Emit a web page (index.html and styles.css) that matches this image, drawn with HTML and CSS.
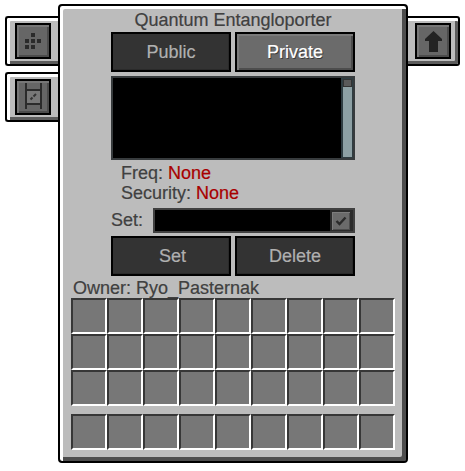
FILE: index.html
```html
<!DOCTYPE html>
<html lang="en">
<head>
<meta charset="utf-8">
<title>Quantum Entangloporter</title>
<link rel="stylesheet" href="styles.css">
</head>
<body>
<main class="gui">
  <nav class="tabs tabs-left">
    <div class="tab tab-left">
      <button class="icon-btn" type="button" aria-label="Visuals">
        <svg width="32" height="32" viewBox="0 0 32 32"><g fill="#2b2b2b"><rect x="14" y="8" width="4" height="4"/><rect x="8" y="14" width="4" height="4"/><rect x="14" y="14" width="4" height="4"/><rect x="20" y="14" width="4" height="4"/><rect x="8" y="20" width="4" height="4"/><rect x="14" y="20" width="4" height="4"/></g></svg>
      </button>
    </div>
    <div class="tab tab-left">
      <button class="icon-btn" type="button" aria-label="Frequency">
        <svg width="32" height="32" viewBox="0 0 32 32"><rect x="10" y="9" width="13" height="14" fill="#787878"/><g fill="#2b2b2b"><rect x="8" y="2" width="2" height="26"/><rect x="23" y="2" width="2" height="26"/><rect x="10" y="8" width="13" height="2"/><rect x="10" y="22" width="13" height="2"/></g><path d="M13.500 18.500 L15.500 16.500 M16.500 15.500 L19 13" stroke="#333" stroke-width="2" fill="none"/></svg>
      </button>
    </div>
  </nav>
  <section class="panel">
    <h1 class="title">Quantum Entangloporter</h1>
    <div class="controls">
      <div class="btn-row">
        <button class="btn" type="button">Public</button>
        <button class="btn btn-on" type="button">Private</button>
      </div>
      <div class="list">
        <div class="list-body"></div>
        <div class="scroll"><div class="thumb"></div></div>
      </div>
      <div class="info">
        <p class="line">Freq: <span class="none">None</span></p>
        <p class="line">Security: <span class="none">None</span></p>
      </div>
      <div class="set-row">
        <span class="set-label">Set:</span>
        <div class="field">
          <div class="field-input"></div>
          <div class="check-wrap">
            <div class="check">
              <svg width="14" height="14" viewBox="0 0 14 14"><path d="M2.500 7 L5.500 10 L11.500 3.500" fill="none" stroke="#2b2b2b" stroke-width="2.400"/></svg>
            </div>
          </div>
        </div>
      </div>
      <div class="btn-row">
        <button class="btn btn-set" type="button">Set</button>
        <button class="btn" type="button">Delete</button>
      </div>
    </div>
    <p class="owner">Owner: Ryo_Pasternak</p>
    <div class="slots">
      <i></i><i></i><i></i><i></i><i></i><i></i><i></i><i></i><i></i>
      <i></i><i></i><i></i><i></i><i></i><i></i><i></i><i></i><i></i>
      <i></i><i></i><i></i><i></i><i></i><i></i><i></i><i></i><i></i>
    </div>
    <div class="slots hotbar">
      <i></i><i></i><i></i><i></i><i></i><i></i><i></i><i></i><i></i>
    </div>
  </section>
  <nav class="tabs tabs-right">
    <div class="tab tab-right">
      <button class="icon-btn" type="button" aria-label="Upgrade">
        <svg width="32" height="32" viewBox="0 0 32 32"><path d="M16.500 6 L25 14 V16 H21 V27 H12 V16 H8 V14 Z" fill="#232323"/></svg>
      </button>
    </div>
  </nav>
</main>
</body>
</html>
```
FILE: styles.css
```css
* { box-sizing: border-box; }
html, body { margin: 0; padding: 0; background: #fff; }
body { width: 465px; height: 471px; overflow: hidden; font-family: "Liberation Sans", Arial, sans-serif; }
p, h1 { margin: 0; font-weight: normal; }
button { font-family: inherit; margin: 0; padding: 0; cursor: default; }

.gui { display: flex; align-items: flex-start; padding: 4px 0 0 5px; }

.tabs { display: flex; flex-direction: column; gap: 6px; margin-top: 12px; flex: none; }

.tab { width: 53px; height: 50px; display: flex; align-items: center; background: #bcbcbc; border: 2px solid #000; border-radius: 3px; }
.tab-left { padding-left: 8px; border-right: 0; border-radius: 3px 0 0 3px; box-shadow: inset 3px 3px 0 #fff, inset 0 -3px 0 #5c5c5c; }
.tab-right { width: 52px; padding-left: 7px; border-left: 0; border-radius: 0 3px 3px 0; box-shadow: inset 0 3px 0 #fff, inset -3px -3px 0 #5c5c5c; }

.icon-btn { width: 36px; height: 36px; display: flex; align-items: center; justify-content: center; background: #666; border: 2px solid #000; box-shadow: inset 2px 2px 0 #777, inset -2px -2px 0 #4c4c4c; }

.panel { width: 350px; height: 459px; flex: none; padding: 4px 0 0 11px; background: #bcbcbc; border: 2px solid #000; border-radius: 4px; box-shadow: inset 3px 3px 0 #fff, inset -4px -4px 0 #4d4d4d; }

.title { height: 20px; margin-bottom: 2px; width: 324px; text-align: center; font-size: 18px; line-height: 21px; color: #404040; -webkit-text-stroke: 0.200px #404040; }

.controls { padding-left: 40px; width: 284px; }

.btn-row { display: flex; gap: 4px; }

.btn { width: 120px; height: 40px; padding-top: 1px; background: #333; border: 2px solid #000; color: #b0b0b0; font-size: 18px; -webkit-text-stroke: 0.200px #b0b0b0; box-shadow: inset -1px -1px 0 #2a2a2a; }
.btn-on { background: #6b6b6b; color: #fff; -webkit-text-stroke: 0.200px #fff; text-shadow: 1px 1px 0 #3a3a3a; box-shadow: inset 2px 2px 0 #7a7a7a, inset -2px -2px 0 #4d4d4d; }
.btn-set { padding-left: 3px; }

.list { display: flex; width: 244px; height: 84px; margin-top: 4px; border: 2px solid #373b3d; background: #000; }
.list-body { flex: 1; }
.scroll { width: 12px; background: #8da0a4; border-style: solid; border-color: #2f3d42; border-width: 1px 1px 1px 2px; }
.thumb { height: 8px; background: #5a5a5a; border: 1px solid #333; }

.info { margin-top: 3px; padding-left: 10px; }
.line { height: 20px; font-size: 18px; line-height: 21px; color: #404040; -webkit-text-stroke: 0.200px #404040; }
.none { color: #a80000; -webkit-text-stroke: 0.200px #a80000; }

.set-row { display: flex; align-items: center; height: 25px; margin-top: 5px; margin-bottom: 3px; }
.set-label { width: 42px; font-size: 18px; color: #404040; -webkit-text-stroke: 0.200px #404040; }
.field { flex: 1; height: 25px; display: flex; padding: 2px; background: #404040; }
.field-input { flex: 1; background: #000; }
.check-wrap { width: 23px; display: flex; align-items: center; justify-content: center; padding-right: 2px; background: #2b2b2b; }
.check { width: 18px; height: 18px; flex: none; display: flex; align-items: center; justify-content: center; background: #6b6b6b; box-shadow: inset 1px 1px 0 #7d7d7d, inset -1px -1px 0 #4d4d4d; }

.owner { height: 20px; margin-top: 2px; padding-left: 2px; font-size: 18px; line-height: 21px; color: #404040; -webkit-text-stroke: 0.200px #404040; }

.slots { display: grid; grid-template-columns: repeat(9, 36px); grid-auto-rows: 36px; width: 324px; }
.slots i { display: block; background: #777; border-style: solid; border-width: 2px; border-color: #373737 #fff #fff #373737; }
.hotbar { margin-top: 8px; }
```
